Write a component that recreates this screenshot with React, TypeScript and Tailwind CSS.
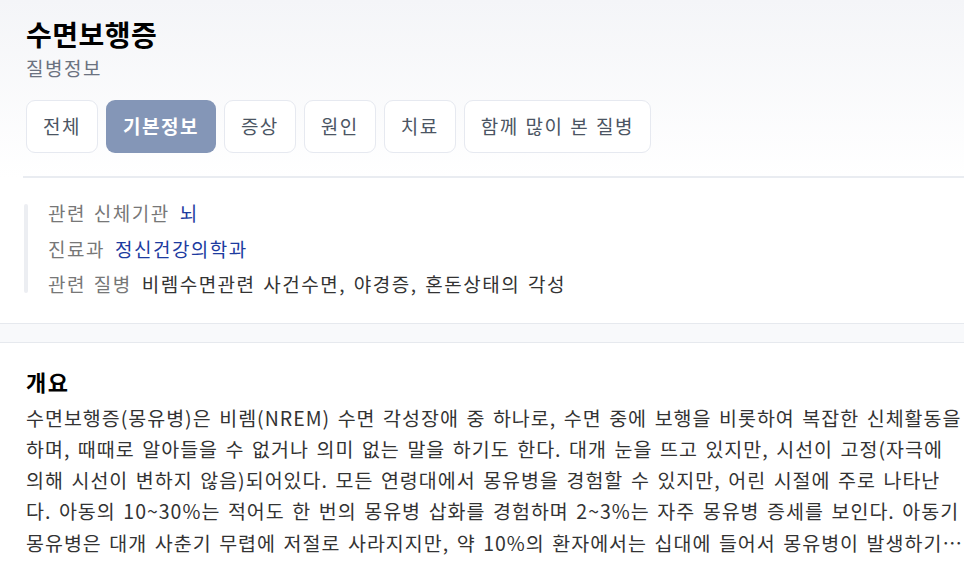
const tabs = ["전체", "기본정보", "증상", "원인", "치료", "함께 많이 본 질병"]

const summary =
  "수면보행증(몽유병)은 비렘(NREM) 수면 각성장애 중 하나로, 수면 중에 보행을 비롯하여 복잡한 신체활동을 하며, 때때로 알아들을 수 없거나 의미 없는 말을 하기도 한다. 대개 눈을 뜨고 있지만, 시선이 고정(자극에 의해 시선이 변하지 않음)되어있다. 모든 연령대에서 몽유병을 경험할 수 있지만, 어린 시절에 주로 나타난다. 아동의 10~30%는 적어도 한 번의 몽유병 삽화를 경험하며 2~3%는 자주 몽유병 증세를 보인다. 아동기 몽유병은 대개 사춘기 무렵에 저절로 사라지지만, 약 10%의 환자에서는 십대에 들어서 몽유병이 발생하기도 한다."

export default function App() {
  return (
    <div
      className="min-h-screen bg-white text-[#333]"
      style={{ fontFamily: '"Noto Sans CJK KR", "Noto Sans", sans-serif' }}
    >
      {/* Header */}
      <section className="bg-gradient-to-b from-[#f4f5f8] to-white pt-[15px] pl-[26px]">
        <h1 className="text-[28px] font-bold leading-[38px] tracking-[0.5px] text-black">수면보행증</h1>
        <p className="mt-[2px] text-[19px] leading-[26px] tracking-[1.5px] text-[#6b7280]">질병정보</p>
        <nav className="flex gap-[8px] mt-[19px]">
          {tabs.map((t) =>
            t === "기본정보" ? (
              <button
                key={t}
                className="h-[53px] px-[17px] rounded-[9px] bg-[#8496b7] text-white font-bold text-[19px] tracking-[1.5px]"
              >
                {t}
              </button>
            ) : (
              <button
                key={t}
                className="h-[53px] px-[16px] rounded-[9px] border border-[#e6e9f0] bg-white text-[#4b5563] text-[19px] tracking-[1.5px] [word-spacing:1px]"
              >
                {t}
              </button>
            )
          )}
        </nav>
        <div className="mt-[23px] ml-[-3px] h-[2px] bg-[#e9ecf1]" />
      </section>

      {/* Basic info */}
      <section className="px-[24px] pt-[17px] pb-[21px]">
        <div className="flex">
          <div className="w-[4px] my-[9px] rounded-full bg-[#eceef2]" />
          <dl className="pl-[20px] text-[19px] leading-[35.5px] tracking-[1.5px] [word-spacing:2px]">
            <div className="flex gap-[10px]">
              <dt className="text-[#777]">관련 신체기관</dt>
              <dd className="text-[#1d3b9f]">뇌</dd>
            </div>
            <div className="flex gap-[10px]">
              <dt className="text-[#777]">진료과</dt>
              <dd className="text-[#1d3b9f]">정신건강의학과</dd>
            </div>
            <div className="flex gap-[10px]">
              <dt className="text-[#777]">관련 질병</dt>
              <dd className="text-[#333]">비렘수면관련 사건수면, 야경증, 혼돈상태의 각성</dd>
            </div>
          </dl>
        </div>
      </section>

      <div className="h-[20px] bg-[#f8f9fb] border-y border-[#e6e9ee]" />

      {/* Summary */}
      <section className="pl-[26px] pt-[22px]">
        <h2 className="text-[22px] font-bold leading-[32px] tracking-[1.5px] text-black">개요</h2>
        <p className="mt-[5px] text-[19.5px] leading-[31.3px] tracking-[1px] [word-spacing:2.2px] line-clamp-5">
          {summary}
        </p>
      </section>
    </div>
  )
}
